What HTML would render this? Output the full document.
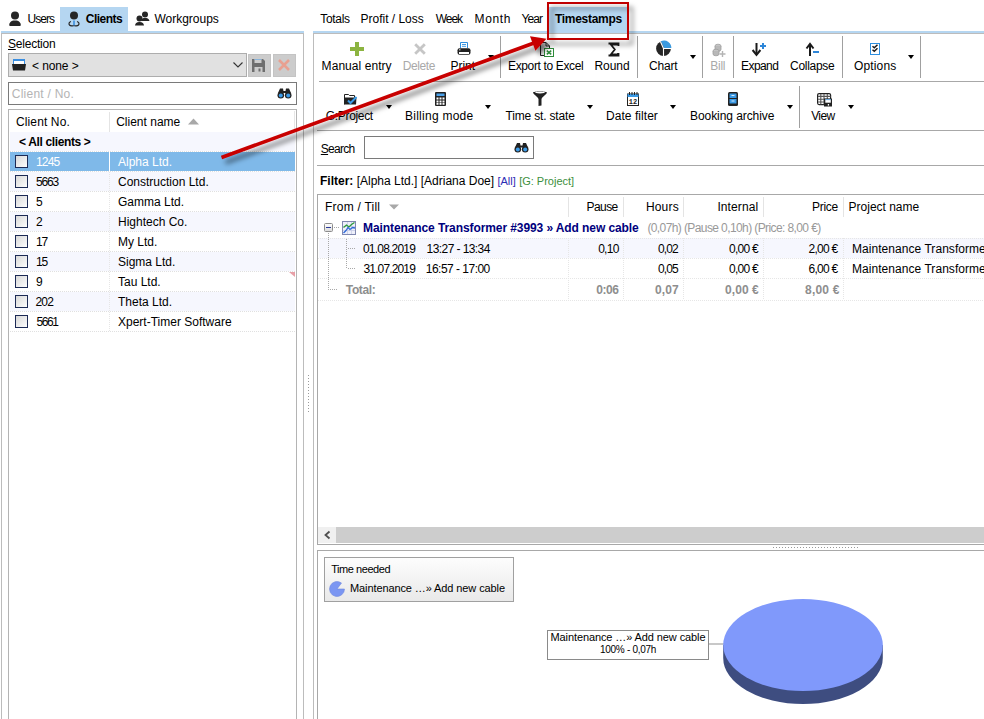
<!DOCTYPE html>
<html><head><meta charset="utf-8">
<style>
*{margin:0;padding:0;box-sizing:border-box}
html,body{width:984px;height:719px;overflow:hidden;background:#fff}
body{position:relative;font-family:"Liberation Sans",sans-serif;font-size:12px;color:#000}
.a{position:absolute}
svg.a{overflow:visible}
.t{position:absolute;white-space:nowrap;line-height:15px;font-size:12px}
.b{font-weight:bold}
.gr{color:#a0a0a0}
.sep{position:absolute;width:1px;background:#a0a0a0}
.dd{position:absolute;width:0;height:0;border-left:3.5px solid transparent;border-right:3.5px solid transparent;border-top:4px solid #000}
.cb{position:absolute;left:15px;width:13px;height:13px;border:1px solid #1c2a55;background:linear-gradient(135deg,#d8d8d8,#fdfdfd)}
.rw{position:absolute;left:10px;width:285px;height:20px;border-bottom:1px dotted #e0e0e0;background-clip:padding-box}
.tint{background-color:#f6f7fe}
.ct{font-size:11px}
</style></head><body>

<!-- LEFT TABS -->
<div class="a" style="left:60px;top:7px;width:68px;height:24px;background:#b5d6f1"></div>
<div class="a" style="left:1px;top:31px;width:303px;height:2px;background:#b5d6f1"></div>
<svg class="a" style="left:9px;top:11px" width="12" height="15" viewBox="0 0 12 15">
 <circle cx="6" cy="4.5" r="4" fill="#262626"/>
 <path d="M1 15 C0.2 15 0 14 0.5 12.5 C1.5 10 3.5 9.5 6 9.5 C8.5 9.5 10.5 10 11.5 12.5 C12 14 11.8 15 11 15Z" fill="#262626"/>
</svg>
<div class="t" style="left:27.6px;top:12px;letter-spacing:-0.98px">Users</div>
<svg class="a" style="left:68px;top:11px" width="12" height="15" viewBox="0 0 12 15">
 <circle cx="6" cy="4.5" r="4" fill="#262626"/>
 <path d="M3 10.5 C1 11 0.5 13 1.5 14 C2.5 15 5 15 6 14.5 C7 15 9.5 15 10.5 14 C11.5 13 11 11 9 10.5" fill="none" stroke="#262626" stroke-width="1.2"/>
 <rect x="5.2" y="9.5" width="1.6" height="5" fill="#3c8fde"/>
</svg>
<div class="t b" style="left:85.8px;top:12px;letter-spacing:-0.52px">Clients</div>
<svg class="a" style="left:135px;top:11px" width="15" height="15" viewBox="0 0 15 15">
 <circle cx="10" cy="3.5" r="3" fill="#262626"/>
 <path d="M6 10 C6.5 7.5 8 7 10 7 C12 7 14 7.5 14.5 10Z" fill="#262626"/>
 <circle cx="4.5" cy="7.5" r="3" fill="#262626"/>
 <path d="M0 14.5 C0.5 11.5 2.5 11 4.5 11 C6.5 11 8.5 11.5 9 14.5Z" fill="#262626"/>
</svg>
<div class="t" style="left:154.4px;top:12px;letter-spacing:-0.00px">Workgroups</div>

<!-- LEFT PANEL -->
<div class="a" style="left:1px;top:33px;width:303px;height:700px;border:1px solid #bcbcbc"></div>
<div class="t" style="left:8.0px;top:37px;letter-spacing:-0.21px"><u>S</u>election</div>
<div class="a" style="left:8px;top:53px;width:239px;height:24px;background:#e1e1e1;border:1px solid #adadad"></div>
<svg class="a" style="left:12px;top:59px" width="14" height="12" viewBox="0 0 14 12">
 <rect x="1.5" y="0.5" width="11" height="5" fill="#fff" stroke="#3a8ee0"/>
 <rect x="1.5" y="0.5" width="11" height="1.5" fill="#3a8ee0"/>
 <path d="M0 5 L14 5 L13 11.5 L1 11.5Z" fill="#222"/>
</svg>
<div class="t" style="left:32.0px;top:59px;letter-spacing:-0.10px">&lt; none &gt;</div>
<svg class="a" style="left:233px;top:62px" width="10" height="6" viewBox="0 0 10 6"><path d="M0.5 0.5 L5 5 L9.5 0.5" fill="none" stroke="#333" stroke-width="1.1"/></svg>
<div class="a" style="left:248px;top:54px;width:23px;height:23px;background:#cccccc;border:1px solid #c4c4c4"></div>
<svg class="a" style="left:252px;top:59px" width="13" height="13" viewBox="0 0 13 13">
 <path d="M0 0 H11 L13 2 V13 H0Z" fill="#6e6e6e"/>
 <rect x="2.5" y="0" width="7" height="4" fill="#cccccc"/>
 <rect x="2.5" y="0" width="7" height="0.8" fill="#7aaede"/>
 <rect x="2.5" y="8" width="8" height="5" fill="#cccccc"/>
 <rect x="6.5" y="9.5" width="2" height="3" fill="#6e6e6e"/>
</svg>
<div class="a" style="left:273px;top:54px;width:23px;height:23px;background:#cccccc;border:1px solid #c4c4c4"></div>
<svg class="a" style="left:278px;top:59px" width="12" height="12" viewBox="0 0 12 12"><path d="M1 1 L11 11 M11 1 L1 11" stroke="#e8a090" stroke-width="2.6"/></svg>
<div class="a" style="left:8px;top:82px;width:289px;height:23px;border:1px solid #7a7a7a"></div>
<div class="t" style="left:11.8px;top:87px;color:#b4b4b4;letter-spacing:0.24px">Client / No.</div>
<svg class="a" style="left:277px;top:88px" width="15" height="11" viewBox="0 0 15 11">
 <path d="M1 5 L3 0.5 H6 L6.5 3 H8.5 L9 0.5 H12 L14 5Z" fill="#222"/>
 <circle cx="3.8" cy="7.2" r="3.3" fill="#222"/><circle cx="11.2" cy="7.2" r="3.3" fill="#222"/>
 <circle cx="3.8" cy="7.4" r="2" fill="#3c9be8"/><circle cx="11.2" cy="7.4" r="2" fill="#3c9be8"/>
</svg>

<!-- LEFT GRID -->
<div class="a" style="left:8px;top:109px;width:289px;height:620px;border:1px solid #b4b4b4"></div>
<div class="a" style="left:294px;top:111px;width:1px;height:22px;background:#e6e6e6"></div>
<div class="t" style="left:16.0px;top:115px;letter-spacing:0.12px">Client No.</div>
<div class="t" style="left:116.2px;top:115px;letter-spacing:-0.00px">Client name</div>
<svg class="a" style="left:188px;top:118px" width="11" height="7" viewBox="0 0 11 7"><path d="M0 6.5 L5.5 0.5 L11 6.5Z" fill="#a8a8a8"/></svg>
<div class="a" style="left:109px;top:112px;width:1px;height:20px;background:#e4e4e4"></div>
<div class="rw tint" style="top:132px"></div>
<div class="t b" style="left:19.0px;top:135px;letter-spacing:-0.36px">&lt; All clients &gt;</div>
<div class="rw" style="top:152px;background-color:#7fb9e9"></div>
<div class="cb" style="top:155px"></div>
<div class="t" style="left:36.0px;top:155px;color:#fff;letter-spacing:-0.81px">1245</div>
<div class="t" style="left:118px;top:155px;color:#fff;">Alpha Ltd.</div>
<div class="rw tint" style="top:172px"></div>
<div class="cb" style="top:175px"></div>
<div class="t" style="left:36px;top:175px;letter-spacing:-1.2px">5663</div>
<div class="t" style="left:118px;top:175px;">Construction Ltd.</div>
<div class="rw" style="top:192px"></div>
<div class="cb" style="top:195px"></div>
<div class="t" style="left:36px;top:195px;letter-spacing:-1.2px">5</div>
<div class="t" style="left:118px;top:195px;">Gamma Ltd.</div>
<div class="rw tint" style="top:212px"></div>
<div class="cb" style="top:215px"></div>
<div class="t" style="left:36px;top:215px;letter-spacing:-1.2px">2</div>
<div class="t" style="left:118px;top:215px;">Hightech Co.</div>
<div class="rw" style="top:232px"></div>
<div class="cb" style="top:235px"></div>
<div class="t" style="left:36px;top:235px;letter-spacing:-1.2px">17</div>
<div class="t" style="left:118px;top:235px;">My Ltd.</div>
<div class="rw tint" style="top:252px"></div>
<div class="cb" style="top:255px"></div>
<div class="t" style="left:36px;top:255px;letter-spacing:-1.2px">15</div>
<div class="t" style="left:118px;top:255px;">Sigma Ltd.</div>
<div class="rw" style="top:272px"></div>
<div class="cb" style="top:275px"></div>
<div class="t" style="left:36px;top:275px;letter-spacing:-1.2px">9</div>
<div class="t" style="left:118px;top:275px;">Tau Ltd.</div>
<div class="rw tint" style="top:292px"></div>
<div class="cb" style="top:295px"></div>
<div class="t" style="left:35.6px;top:295px;letter-spacing:-0.90px">202</div>
<div class="t" style="left:118px;top:295px;">Theta Ltd.</div>
<div class="rw" style="top:312px"></div>
<div class="cb" style="top:315px"></div>
<div class="t" style="left:36.4px;top:315px;letter-spacing:-1.40px">5661</div>
<div class="t" style="left:118px;top:315px;">Xpert-Timer Software</div>
<div class="a" style="left:109px;top:152px;width:1px;height:180px;background:repeating-linear-gradient(#e6e6e6 0 1px,transparent 1px 2px)"></div>
<div class="a" style="left:109px;top:152px;width:1px;height:19px;background:#fff"></div>
<svg class="a" style="left:289px;top:272px" width="6" height="5" viewBox="0 0 6 5"><path d="M0 0 H6 V5Z" fill="#e8a0a8"/></svg>

<!-- SPLITTER DOTS LEFT -->
<div class="a" style="left:308px;top:375px;width:1px;height:37px;background:repeating-linear-gradient(#9a9a9a 0 1px,transparent 1px 3px)"></div>

<!-- RIGHT TABS -->
<div class="a" style="left:549px;top:7px;width:78px;height:24px;background:#b5d6f1"></div>
<div class="a" style="left:313px;top:31px;width:671px;height:2px;background:#b5d6f1"></div>
<div class="t" style="left:320.2px;top:12px;letter-spacing:-0.31px">Totals</div>
<div class="t" style="left:360.6px;top:12px;letter-spacing:-0.02px">Profit / Loss</div>
<div class="t" style="left:435.8px;top:12px;letter-spacing:-1.06px">Week</div>
<div class="t" style="left:474.6px;top:12px;letter-spacing:0.62px">Month</div>
<div class="t" style="left:521.6px;top:12px;letter-spacing:-0.92px">Year</div>
<div class="t b" style="left:555px;top:12px;letter-spacing:-0.3px">Timestamps</div>

<!-- RIGHT PANEL -->
<div class="a" style="left:313px;top:33px;width:680px;height:700px;border:1px solid #bcbcbc"></div>
<div class="t" style="left:321.6px;top:59px;letter-spacing:0.06px">Manual entry</div>
<svg class="a" style="left:350px;top:42px" width="14" height="14" viewBox="0 0 14 14"><path d="M5 0H9V5H14V9H9V14H5V9H0V5H5Z" fill="#8cb440"/></svg>
<div class="t" style="left:402.8px;top:59px;letter-spacing:-0.42px;color:#a9a9a9">Delete</div>
<svg class="a" style="left:414px;top:43px" width="12" height="12" viewBox="0 0 12 12"><path d="M1.2 1.2L10.8 10.8M10.8 1.2L1.2 10.8" stroke="#c6c6c6" stroke-width="2.8"/></svg>
<div class="t" style="left:450.6px;top:59px;letter-spacing:-0.05px">Print</div>
<svg class="a" style="left:457px;top:42px" width="14" height="13" viewBox="0 0 14 13"><path d="M3.5 6V0.5H10.5V6" fill="#fff" stroke="#2e8fe0"/><path d="M5 2.5H9M5 4.3H9" stroke="#2e8fe0" stroke-width="0.9"/><rect x="0.5" y="6.3" width="13" height="6.4" rx="2" fill="#222"/><rect x="2" y="10" width="10" height="2" fill="#fff"/><rect x="2" y="7.3" width="1.5" height="1" fill="#ddd"/></svg>
<div class="dd" style="left:488px;top:55px"></div>
<div class="sep" style="left:500px;top:36px;height:42px"></div>
<div class="t" style="left:508.0px;top:59px;letter-spacing:-0.36px">Export to Excel</div>
<svg class="a" style="left:539px;top:42px" width="15" height="15" viewBox="0 0 15 15"><defs><linearGradient id="pg" x1="0" y1="0" x2="1" y2="1"><stop offset="0" stop-color="#d0d0d0"/><stop offset="1" stop-color="#ffffff"/></linearGradient></defs><path d="M1.5 0.5H7L10.5 4V13.5H1.5Z" fill="url(#pg)" stroke="#222"/><path d="M7 0.5V4H10.5" fill="none" stroke="#222"/><rect x="5.5" y="6.5" width="9" height="8" fill="#fff" stroke="#2e8b3a"/><path d="M7.8 8.6L12.2 12.4M12.2 8.6L7.8 12.4" stroke="#2e8b3a" stroke-width="1.6"/></svg>
<div class="t" style="left:594.4px;top:59px;letter-spacing:-0.03px">Round</div>
<svg class="a" style="left:608px;top:43px" width="11" height="13" viewBox="0 0 11 13"><path d="M0.5 0.5H10.5V3M10 1.5H2.8L6.8 6.5L2.8 11.5H10V10M0.5 12.5H10.5V10" fill="none" stroke="#1a1a1a" stroke-width="1.8" stroke-linejoin="miter"/></svg>
<div class="sep" style="left:637px;top:36px;height:42px"></div>
<svg class="a" style="left:656px;top:41px" width="15" height="15" viewBox="0 0 15 15"><circle cx="7.5" cy="7.5" r="7.4" fill="#262626"/><path d="M8 7 L4.9 0.2 A7.4 7.4 0 0 1 15.4 7 Z" fill="#3a9ae0"/><path d="M7.5 7.5 L4.4 0.6 M7.5 7.5 H15.5 M7.5 7.5 V15.5" stroke="#fff" stroke-width="1.1"/></svg>
<div class="t" style="left:649.0px;top:59px;letter-spacing:-0.20px">Chart</div>
<div class="dd" style="left:690px;top:55px"></div>
<div class="sep" style="left:702px;top:36px;height:42px"></div>
<svg class="a" style="left:712px;top:43px" width="14" height="14" viewBox="0 0 14 14"><ellipse cx="6" cy="3" rx="3" ry="1.8" fill="#c4c4c4" stroke="#a0a0a0" stroke-width="0.8"/><path d="M3 3V6.5A3 1.8 0 0 0 9 6.5V3" fill="#b8b8b8" stroke="#a0a0a0" stroke-width="0.8"/><ellipse cx="4" cy="8" rx="3" ry="1.8" fill="#c4c4c4" stroke="#a0a0a0" stroke-width="0.8"/><path d="M1 8V11A3 1.8 0 0 0 7 11V8" fill="#b8b8b8" stroke="#a0a0a0" stroke-width="0.8"/><path d="M10.5 8V14M7.5 11H13.5" stroke="#b4b4b4" stroke-width="1.4"/></svg>
<div class="t" style="left:710.2px;top:59px;letter-spacing:-0.23px;color:#a9a9a9">Bill</div>
<div class="sep" style="left:733px;top:36px;height:42px"></div>
<svg class="a" style="left:752px;top:43px" width="15" height="14" viewBox="0 0 15 14"><path d="M4.5 0V11" stroke="#1a1a1a" stroke-width="2"/><path d="M0.6 7L4.5 11.8L8.4 7" fill="none" stroke="#1a1a1a" stroke-width="2"/><path d="M11 0V6M8 3H14" stroke="#2e86d8" stroke-width="2"/></svg>
<div class="t" style="left:741.0px;top:59px;letter-spacing:-0.56px">Expand</div>
<svg class="a" style="left:806px;top:42px" width="14" height="14" viewBox="0 0 14 14"><path d="M4 2.5V14" stroke="#1a1a1a" stroke-width="2"/><path d="M0.5 6.5L4 2L7.5 6.5" fill="none" stroke="#1a1a1a" stroke-width="2"/><path d="M7 10H13" stroke="#2e86d8" stroke-width="2"/></svg>
<div class="t" style="left:790.0px;top:59px;letter-spacing:-0.28px">Collapse</div>
<div class="sep" style="left:842px;top:36px;height:42px"></div>
<svg class="a" style="left:870px;top:43px" width="10" height="12" viewBox="0 0 10 12"><rect x="0.5" y="0.5" width="9" height="11" fill="#fff" stroke="#2e8fe0"/><path d="M2.5 3.2L4.3 4.8L7.5 1.8M2.5 6.7L4.3 8.3L7.5 5.3" fill="none" stroke="#1a1a1a" stroke-width="1.5"/></svg>
<div class="t" style="left:854.0px;top:59px;letter-spacing:0.15px">Options</div>
<div class="dd" style="left:908px;top:55px"></div>
<div class="sep" style="left:920px;top:36px;height:42px"></div>
<div class="a" style="left:319px;top:81px;width:670px;height:1px;background:#a8a8a8"></div>
<svg class="a" style="left:344px;top:93px" width="14" height="12" viewBox="0 0 14 12"><path d="M0.5 11.5V1.5H4.5L5.5 2.5H10.5V4.5" fill="none" stroke="#222"/><path d="M0.5 4.5H12.5L12 11.5H0.5Z" fill="#222"/><path d="M4 7.5L6.5 10L12.5 4" fill="none" stroke="#3a9ae6" stroke-width="2"/></svg>
<div class="t" style="left:325.8px;top:109px;letter-spacing:-0.33px">G:Project</div>
<div class="dd" style="left:386px;top:105px"></div>
<svg class="a" style="left:435px;top:92px" width="11" height="14" viewBox="0 0 11 14"><rect x="0" y="0" width="11" height="14" rx="1" fill="#222"/><rect x="1.5" y="1.5" width="8" height="2.5" fill="#4aa0e8"/><g fill="#fff"><rect x="1.5" y="5.5" width="2" height="2"/><rect x="4.5" y="5.5" width="2" height="2"/><rect x="7.5" y="5.5" width="2" height="2"/><rect x="1.5" y="8.5" width="2" height="2"/><rect x="4.5" y="8.5" width="2" height="2"/><rect x="7.5" y="8.5" width="2" height="2"/><rect x="1.5" y="11" width="2" height="1.8"/><rect x="4.5" y="11" width="2" height="1.8"/><rect x="7.5" y="11" width="2" height="1.8"/></g></svg>
<div class="t" style="left:405.0px;top:109px;letter-spacing:0.26px">Billing mode</div>
<div class="dd" style="left:485px;top:105px"></div>
<svg class="a" style="left:533px;top:91px" width="14" height="15" viewBox="0 0 14 15"><path d="M0 1.5C0 0 14 0 14 1.5C14 3 9 6 8.5 8V14.5L5.5 15V8C5 6 0 3 0 1.5Z" fill="#222"/><ellipse cx="7" cy="1.6" rx="5" ry="0.8" fill="#fff"/></svg>
<div class="t" style="left:505.6px;top:109px;letter-spacing:-0.18px">Time st. state</div>
<div class="dd" style="left:587px;top:105px"></div>
<svg class="a" style="left:627px;top:92px" width="12" height="14" viewBox="0 0 12 14"><rect x="0.5" y="2" width="11" height="11.5" fill="#fff" stroke="#222"/><rect x="0.5" y="2" width="11" height="3" fill="#3a9ae6"/><path d="M2.5 0V3M5 0V3M7.5 0V3M10 0V3" stroke="#222" stroke-width="1"/><text x="6" y="12.3" font-size="7" font-family="Liberation Mono" font-weight="bold" text-anchor="middle" fill="#222">12</text></svg>
<div class="t" style="left:606.0px;top:109px;letter-spacing:0.05px">Date filter</div>
<div class="dd" style="left:670px;top:105px"></div>
<svg class="a" style="left:728px;top:92px" width="10" height="14" viewBox="0 0 10 14"><rect x="0" y="0" width="10" height="14" rx="1.5" fill="#222"/><rect x="1.5" y="1.5" width="7" height="4.5" fill="#3a9ae6"/><rect x="1.5" y="7" width="7" height="4.5" fill="#3a9ae6"/><path d="M3.5 3.5H6.5M3.5 9H6.5" stroke="#fff" stroke-width="0.8"/></svg>
<div class="t" style="left:690.0px;top:109px;letter-spacing:-0.07px">Booking archive</div>
<div class="dd" style="left:787px;top:105px"></div>
<div class="sep" style="left:799px;top:86px;height:42px"></div>
<svg class="a" style="left:817px;top:93px" width="16" height="14" viewBox="0 0 16 14"><rect x="0.6" y="0.6" width="13" height="11" rx="1.5" fill="#fff" stroke="#222" stroke-width="1.2"/><path d="M3.8 1V11.5M7 1V11.5M10.3 1V11.5M1 3.4H13.5M1 6.2H13.5M1 9H13.5" stroke="#555" stroke-width="1.1"/><rect x="7" y="5.5" width="8" height="8" fill="#222"/><rect x="8.3" y="6.3" width="5.5" height="3.4" fill="#fff"/><rect x="8.3" y="6.3" width="5.5" height="0.8" fill="#4aa0e8"/><rect x="10.8" y="11" width="1.3" height="1.6" fill="#fff"/></svg>
<div class="t" style="left:811.2px;top:109px;letter-spacing:-0.62px">View</div>
<div class="dd" style="left:848px;top:105px"></div>
<div class="a" style="left:317px;top:130px;width:670px;height:1px;background:#a8a8a8"></div>
<div class="t" style="left:320.8px;top:142px;letter-spacing:-0.72px"><u>S</u>earch</div>
<div class="a" style="left:364px;top:136px;width:170px;height:23px;border:1px solid #7a7a7a"></div>
<svg class="a" style="left:514px;top:143px" width="15" height="10" viewBox="0 0 15 10"><path d="M1 4.5L3 0H6L6.5 2.5H8.5L9 0H12L14 4.5Z" fill="#222"/><circle cx="3.8" cy="6.2" r="3.3" fill="#222"/><circle cx="11.2" cy="6.2" r="3.3" fill="#222"/><circle cx="3.8" cy="6.4" r="2" fill="#3c9be8"/><circle cx="11.2" cy="6.4" r="2" fill="#3c9be8"/></svg>
<div class="a" style="left:317px;top:165px;width:670px;height:1px;background:#a8a8a8"></div>
<div class="t" style="left:320px;top:174px"><b>Filter:</b> [Alpha Ltd.] [Adriana Doe] <span style="color:#2d2db4;font-size:11px">[All]</span> <span style="color:#3d8f3d;font-size:11px">[G: Project]</span></div>
<div class="a" style="left:317px;top:194px;width:680px;height:351px;border:1px solid #a8a8a8"></div>
<div class="a" style="left:568px;top:197px;width:1px;height:20px;background:#e4e4e4"></div>
<div class="a" style="left:623px;top:197px;width:1px;height:20px;background:#e4e4e4"></div>
<div class="a" style="left:683px;top:197px;width:1px;height:20px;background:#e4e4e4"></div>
<div class="a" style="left:763px;top:197px;width:1px;height:20px;background:#e4e4e4"></div>
<div class="a" style="left:843px;top:197px;width:1px;height:20px;background:#e4e4e4"></div>
<div class="t" style="left:325.0px;top:200px;letter-spacing:0.23px">From / Till</div>
<svg class="a" style="left:389px;top:204px" width="10" height="6" viewBox="0 0 10 6"><path d="M0 0.5H10L5 5.5Z" fill="#a8a8a8"/></svg>
<div class="t" style="right:366.3px;top:200px;letter-spacing:-0.56px">Pause</div>
<div class="t" style="right:305.2px;top:200px;letter-spacing:0.17px">Hours</div>
<div class="t" style="right:225.8px;top:200px;letter-spacing:0.10px">Internal</div>
<div class="t" style="right:146.0px;top:200px;letter-spacing:-0.25px">Price</div>
<div class="t" style="left:848.6px;top:200px;letter-spacing:-0.01px">Project name</div>
<div class="a" style="left:319px;top:238px;width:670px;height:20px;background:#f6f7fe"></div>
<div class="a" style="left:324px;top:223px;width:9px;height:9px;border:1px solid #8c8c8c;border-radius:1.5px;background:linear-gradient(#fdfdfd,#dcdcdc)"></div>
<div class="a" style="left:326px;top:227px;width:5px;height:1px;background:#2a3a9a"></div>
<div class="a" style="left:334px;top:227px;width:5px;height:1px;background:repeating-linear-gradient(90deg,#a8a8a8 0 1px,transparent 1px 2px)"></div>
<div class="a" style="left:328px;top:233px;width:1px;height:57px;background:repeating-linear-gradient(#a8a8a8 0 1px,transparent 1px 2px)"></div>
<div class="a" style="left:330px;top:289px;width:8px;height:1px;background:repeating-linear-gradient(90deg,#a8a8a8 0 1px,transparent 1px 2px)"></div>
<div class="a" style="left:346px;top:239px;width:1px;height:30px;background:repeating-linear-gradient(#a8a8a8 0 1px,transparent 1px 2px)"></div>
<div class="a" style="left:348px;top:248px;width:7px;height:1px;background:repeating-linear-gradient(90deg,#a8a8a8 0 1px,transparent 1px 2px)"></div>
<div class="a" style="left:348px;top:268px;width:7px;height:1px;background:repeating-linear-gradient(90deg,#a8a8a8 0 1px,transparent 1px 2px)"></div>
<svg class="a" style="left:342px;top:221px" width="15" height="15" viewBox="0 0 15 15"><rect x="0.5" y="0.5" width="13" height="13" fill="#eef0fa" stroke="#8088b0"/><path d="M1 5.5H13M1 9.5H13M5.5 1V13M9.5 1V13" stroke="#c8cde6" stroke-width="0.8"/><path d="M1.5 6.5L4.5 4L7 6L9.5 3.5L12.5 1.5" fill="none" stroke="#2e9a3a" stroke-width="1.3"/><path d="M1.5 12L4 9.5L6 6.5L8 8.5L10.5 6.5L13 7" fill="none" stroke="#2e6ad8" stroke-width="1.3"/></svg>
<div class="t b" style="left:363.0px;top:221px;letter-spacing:-0.09px;color:#00007d">Maintenance Transformer #3993 » Add new cable</div>
<div class="t" style="left:647.4px;top:221px;letter-spacing:-0.60px;color:#999">(0,07h) (Pause 0,10h) (Price: 8,00 €)</div>
<div class="a" style="left:318px;top:238px;width:670px;height:1px;background:repeating-linear-gradient(90deg,#e6e6e6 0 1px,transparent 1px 2px)"></div>
<div class="a" style="left:318px;top:258px;width:670px;height:1px;background:repeating-linear-gradient(90deg,#e6e6e6 0 1px,transparent 1px 2px)"></div>
<div class="a" style="left:318px;top:278px;width:670px;height:1px;background:repeating-linear-gradient(90deg,#e6e6e6 0 1px,transparent 1px 2px)"></div>
<div class="a" style="left:318px;top:300px;width:670px;height:1px;background:repeating-linear-gradient(90deg,#e6e6e6 0 1px,transparent 1px 2px)"></div>
<div class="a" style="left:568px;top:238px;width:1px;height:62px;background:repeating-linear-gradient(#e6e6e6 0 1px,transparent 1px 2px)"></div>
<div class="a" style="left:623px;top:238px;width:1px;height:62px;background:repeating-linear-gradient(#e6e6e6 0 1px,transparent 1px 2px)"></div>
<div class="a" style="left:683px;top:238px;width:1px;height:62px;background:repeating-linear-gradient(#e6e6e6 0 1px,transparent 1px 2px)"></div>
<div class="a" style="left:763px;top:238px;width:1px;height:62px;background:repeating-linear-gradient(#e6e6e6 0 1px,transparent 1px 2px)"></div>
<div class="a" style="left:843px;top:238px;width:1px;height:62px;background:repeating-linear-gradient(#e6e6e6 0 1px,transparent 1px 2px)"></div>
<div class="t" style="left:363.0px;top:242px;letter-spacing:-0.80px">01.08.2019</div>
<div class="t" style="left:426.6px;top:242px;letter-spacing:-0.58px">13:27 - 13:34</div>
<div class="t" style="right:365.4px;top:242px;letter-spacing:-0.73px">0,10</div>
<div class="t" style="right:306.2px;top:242px;letter-spacing:-0.90px">0,02</div>
<div class="t" style="right:226.2px;top:242px;letter-spacing:-0.76px">0,00 €</div>
<div class="t" style="right:146.5px;top:242px;letter-spacing:-0.72px">2,00 €</div>
<div class="t" style="left:852px;top:242px;letter-spacing:0.05px;">Maintenance Transforme</div>
<div class="t" style="left:363.5px;top:262px;letter-spacing:-0.86px">31.07.2019</div>
<div class="t" style="left:425.8px;top:262px;letter-spacing:-0.52px">16:57 - 17:00</div>
<div class="t" style="right:306.2px;top:262px;letter-spacing:-0.90px">0,05</div>
<div class="t" style="right:226.2px;top:262px;letter-spacing:-0.76px">0,00 €</div>
<div class="t" style="right:146.5px;top:262px;letter-spacing:-0.72px">6,00 €</div>
<div class="t" style="left:852px;top:262px;letter-spacing:0.05px;">Maintenance Transforme</div>
<div class="t b" style="left:345.8px;top:283px;letter-spacing:-0.36px;color:#8e8e8e">Total:</div>
<div class="t b" style="right:365.5px;top:283px;letter-spacing:-0.47px;color:#8e8e8e">0:06</div>
<div class="t b" style="right:305.2px;top:283px;letter-spacing:0.11px;color:#8e8e8e">0,07</div>
<div class="t b" style="right:225.2px;top:283px;letter-spacing:0.06px;color:#8e8e8e">0,00 €</div>
<div class="t b" style="right:144.5px;top:283px;letter-spacing:0.18px;color:#8e8e8e">8,00 €</div>
<div class="a" style="left:318px;top:527px;width:670px;height:16px;background:#cdcdcd"></div>
<div class="a" style="left:318px;top:527px;width:18px;height:16px;background:#f0f0f0"></div>
<svg class="a" style="left:324px;top:531px" width="7" height="8" viewBox="0 0 7 8"><path d="M5.5 0.5L1.5 4L5.5 7.5" fill="none" stroke="#505050" stroke-width="1.8"/></svg>
<div class="a" style="left:773px;top:547px;width:86px;height:1px;background:repeating-linear-gradient(90deg,#9a9a9a 0 1px,transparent 1px 3px)"></div>
<div class="a" style="left:317px;top:550px;width:680px;height:200px;border:1px solid #a8a8a8"></div>
<div class="a" style="left:324px;top:557px;width:190px;height:45px;border:1px solid #a0a0a0;background:linear-gradient(#fdfdfd,#e9e9e9)"></div>
<div class="t ct" style="left:331.2px;top:562px;letter-spacing:-0.44px">Time needed</div>
<svg class="a" style="left:329px;top:581px" width="16" height="16" viewBox="0 0 16 16"><path d="M8 8 L15.5 8 A7.5 7.5 0 1 1 12.5 2 Z" fill="#7b96f2" stroke="#6d86de" stroke-width="0.6"/></svg>
<div class="t ct" style="left:350.0px;top:581px;letter-spacing:-0.10px">Maintenance …» Add new cable</div>
<div class="a" style="left:547px;top:630px;width:162px;height:30px;border:1px solid #8a8a8a;background:#fff"></div>
<div class="t ct" style="left:549px;top:630px;width:158px;text-align:center;letter-spacing:-0.1px">Maintenance …» Add new cable</div>
<div class="t" style="left:549px;top:642px;width:158px;text-align:center;font-size:10px;letter-spacing:-0.3px">100% - 0,07h</div>
<div class="a" style="left:709px;top:643px;width:15px;height:2px;background:#c8c8c8"></div>
<svg class="a" style="left:700px;top:590px" width="200" height="125" viewBox="0 0 200 125"><path d="M23.2 55 V68 A79.8 46 0 0 0 182.8 68 V55 Z" fill="#3e4d80"/><ellipse cx="103" cy="55" rx="79.8" ry="46" fill="#8099fb"/></svg>
<svg class="a" style="left:0;top:0" width="984" height="719" viewBox="0 0 984 719">
<defs><filter id="sh" x="-20%" y="-20%" width="140%" height="140%"><feDropShadow dx="4" dy="5" stdDeviation="2.6" flood-color="#000" flood-opacity="0.5"/></filter></defs>
<g filter="url(#sh)">
<rect x="548" y="3" width="80" height="36" fill="none" stroke="#c00000" stroke-width="2"/>
<path d="M221.5 157.5 L534 43" stroke="#c80000" stroke-width="3.6"/>
<path d="M546.5 38.8 L530 36.2 L535.4 50.8Z" fill="#c80000"/>
</g>
</svg>

</body></html>
